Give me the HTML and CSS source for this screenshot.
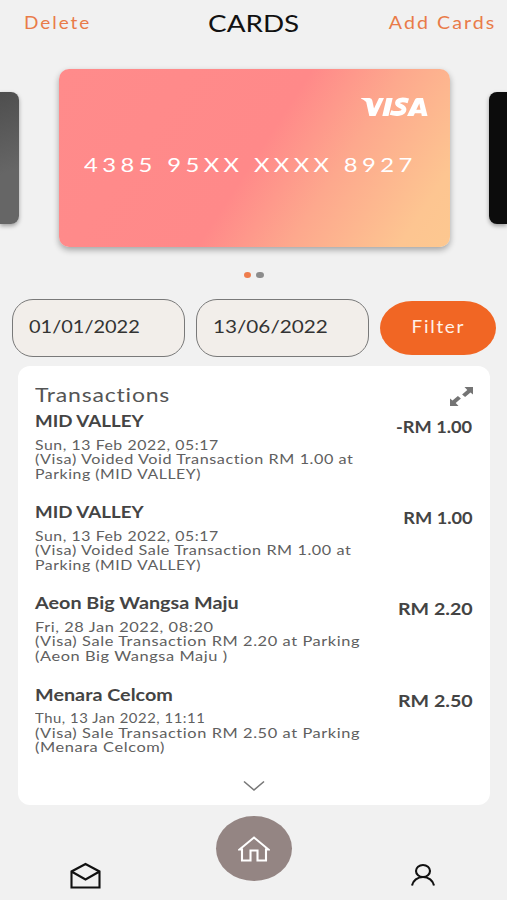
FILE: index.html
```html
<!DOCTYPE html>
<html lang="en">
<head>
<meta charset="utf-8">
<title>Cards</title>
<link rel="stylesheet" href="styles.css">
</head>
<body>
<div class="screen">
  <header class="topbar">
    <a class="action"><span class="wide">Delete</span></a>
    <h1 class="title"><span class="wide">CARDS</span></h1>
    <a class="action action-end"><span class="wide">Add Cards</span></a>
  </header>

  <section class="carousel">
    <div class="side-card side-grey"></div>
    <div class="card">
      <svg class="visa" viewBox="0 0 68 20" role="img" aria-label="Visa">
        <path d="M1 1h8.500q2.300 0 2.800 2.500l1.700 8L19 1h5L15.500 19H9.300L6.200 5Q4 2.500 1 1.500zM26.500 1h6.200l-4.200 18h-6.200zM57 1h6L67.500 19h-5.700l-.5-2.700h-6.400L53.500 19h-6.500L55 2.500Q55.600 1 57 1zM59.300 6.500l-3 6.200h4.200z"/>
        <path class="visa-s" d="M48.300 3.900C43.500 2.400 38.100 2.500 37.500 5.700c-.4 3.500 7 3.300 6.500 7.100-.5 4-8.300 4.500-13.500 2.700"/>
      </svg>
      <p class="number"><span class="wide">4385 95XX XXXX 8927</span></p>
    </div>
    <div class="side-card side-black"></div>
  </section>

  <div class="dots"><i class="dot dot-on"></i><i class="dot"></i></div>

  <section class="filters">
    <div class="date date-from"><span class="wide">01/01/2022</span></div>
    <div class="date"><span class="wide">13/06/2022</span></div>
    <button class="filter"><span class="wide">Filter</span></button>
  </section>

  <main class="panel">
    <div class="panel-head">
      <h2 class="heading"><span class="wide">Transactions</span></h2>
      <svg class="expand" viewBox="0 0 24 20">
        <path d="M15.500 0H24v7.500l-2.500-2-5.400 4.500-3-2.600 5.200-4.500zM9.500 19H1v-7.500l2.500 2 5.400-4.500 3 2.600-5.200 4.500z"/>
      </svg>
    </div>
    <ul class="list">
      <li class="row">
        <div><h3 class="name upper"><span class="wide">MID VALLEY</span></h3>
          <div class="detail"><p class="wide short">Sun, 13 Feb 2022, 05:17</p><p class="wide">(Visa) Voided Void Transaction RM 1.00 at</p><p class="wide short">Parking (MID VALLEY)</p></div></div>
        <div class="amount narrow"><span class="wide">-RM 1.00</span></div>
      </li>
      <li class="row">
        <div><h3 class="name upper"><span class="wide">MID VALLEY</span></h3>
          <div class="detail"><p class="wide short">Sun, 13 Feb 2022, 05:17</p><p class="wide">(Visa) Voided Sale Transaction RM 1.00 at</p><p class="wide short">Parking (MID VALLEY)</p></div></div>
        <div class="amount narrow"><span class="wide">RM 1.00</span></div>
      </li>
      <li class="row">
        <div><h3 class="name"><span class="wide">Aeon Big Wangsa Maju</span></h3>
          <div class="detail"><p class="wide loose">Fri, 28 Jan 2022, 08:20</p><p class="wide loose">(Visa) Sale Transaction RM 2.20 at Parking</p><p class="wide loose">(Aeon Big Wangsa Maju )</p></div></div>
        <div class="amount"><span class="wide">RM 2.20</span></div>
      </li>
      <li class="row">
        <div><h3 class="name"><span class="wide">Menara Celcom</span></h3>
          <div class="detail"><p class="wide tight">Thu, 13 Jan 2022, 11:11</p><p class="wide loose">(Visa) Sale Transaction RM 2.50 at Parking</p><p class="wide loose">(Menara Celcom)</p></div></div>
        <div class="amount"><span class="wide">RM 2.50</span></div>
      </li>
    </ul>
    <svg class="chevron" viewBox="0 0 22 12"><path d="M1 1.500l10 8.500 10-8.500"/></svg>
  </main>

  <nav class="tabs">
    <svg class="icon mail" viewBox="0 0 32 28"><path d="M2.500 9.500V25.500H30.500V9.500L16.500 2zM2.500 9.500l14 8 14-8"/></svg>
    <div class="home">
      <svg class="icon house" viewBox="0 0 32 28"><path d="M1.500 14.500L16 2.500 30.500 14.500H28V25.500H19.500V15.500H12.500V25.500H4V14.500z"/></svg>
    </div>
    <svg class="icon user" viewBox="0 0 26 24"><ellipse cx="13" cy="8" rx="7" ry="6"/><path d="M2 22.500C3 17.500 7.500 14 13 14s10 3.500 11 8.500"/></svg>
  </nav>
</div>
</body>
</html>
```

FILE: styles.css
```css
* { box-sizing: border-box; margin: 0; padding: 0; }
body { background: #f1f1f1; font-family: Lato, "Liberation Sans", sans-serif; color: #444; }
.screen { width: 507px; height: 900px; display: flex; flex-direction: column; overflow: hidden; }
.wide { display: inline-block; white-space: nowrap; transform: scaleX(1.15); transform-origin: left center; }

.topbar { height: 46px; padding: 0 12px; display: grid; grid-template-columns: minmax(0, 1fr) auto minmax(0, 1fr); align-items: center; }
.action { padding-left: 12px; color: #e97b48; font-size: 16.500px; letter-spacing: 1.700px; }
.action-end { padding: 0; text-align: right; }
.action-end .wide { transform: scaleX(1.19); transform-origin: right center; margin-right: -1px; }
.title { color: #111; font-size: 23px; font-weight: 400; }
.title .wide { transform: scaleX(1.21); transform-origin: center; }

.carousel { height: 178px; margin-top: 23px; display: flex; justify-content: space-between; align-items: center; }
.side-card { width: 19px; height: 132px; box-shadow: 0 2px 4px rgba(0, 0, 0, .35); }
.side-grey { border-radius: 0 8px 8px 0; background: linear-gradient(160deg, #4e4e4e, #666 60%); }
.side-black { width: 18px; border-radius: 8px 0 0 8px; background: #0c0c0c; }
.card { width: 391px; height: 178px; padding: 28px 22px 0 25px; border-radius: 10px; background: linear-gradient(123deg, #ff8b8b 0%, #ff8989 50%, #fda88d 68%, #fdc591 90%, #fdc890 100%); box-shadow: 0 3px 6px rgba(0, 0, 0, .32); }
.visa { display: block; width: 68px; height: 20px; margin-left: auto; fill: #fff; fill-rule: evenodd; }
.visa-s { fill: none; stroke: #fff; stroke-width: 4.800; }
.number { margin-top: 34px; color: #fff; font-size: 20px; line-height: 26px; letter-spacing: 3.700px; }
.number .wide { transform: scaleX(1.19); }

.dots { height: 8px; margin-top: 24px; display: flex; justify-content: center; align-items: center; gap: 5px; }
.dot { width: 7.500px; height: 6.500px; border-radius: 50%; background: #8c8c8c; }
.dot-on { background: #ee7c4c; }

.filters { height: 58px; margin: 20px 11px 0 12px; display: grid; grid-template-columns: 173px 173px 116px; gap: 11px; align-items: center; }
.date { height: 58px; padding: 0 16px 4px; display: flex; align-items: center; border: 1.500px solid #797979; border-radius: 21px; background: #f2eeea; color: #333; font-size: 18px; }
.date-from .wide { transform: scaleX(1.11); }
.filter { height: 54px; padding-bottom: 2px; border: 0; border-radius: 32px / 27px; background: #f16624; color: #fff1e8; font: 16.500px Lato, sans-serif; letter-spacing: 1.500px; }
.filter .wide { transform-origin: center; }

.panel { height: 439px; margin: 9px 17px 0 18px; padding: 17px 17px 0; border-radius: 12px; background: #fff; display: flex; flex-direction: column; }
.panel-head { height: 25px; display: flex; justify-content: space-between; align-items: flex-start; }
.heading { font-size: 20px; line-height: 22px; font-weight: 400; letter-spacing: .7px; color: #555; }
.expand { width: 24px; height: 20px; margin-top: 4px; fill: #747474; }
.list { list-style: none; }
.row { height: 91.200px; display: flex; justify-content: space-between; }
.name { height: 29.500px; font-size: 17.500px; line-height: 26px; font-weight: 700; }
.name .wide { transform: scaleX(1.13); }
.upper .wide { transform: scaleX(1.07); }
.detail { display: flex; flex-direction: column; align-items: flex-start; font-size: 14px; line-height: 14.500px; letter-spacing: .5px; color: #606060; }
.detail .wide { transform: scaleX(1.155); }
.detail .short { transform: scaleX(1.13); }
.detail .loose { transform: scaleX(1.17); }
.detail .tight { transform: scaleX(1.06); }
.amount { padding: 6px .5px 0 0; font-size: 17.500px; line-height: 26px; font-weight: 700; }
.amount .wide { transform: scaleX(1.12); transform-origin: right center; }
.narrow .wide { transform: scaleX(1.04); }
.chevron { width: 22px; height: 12px; margin: 7px auto 0; flex: none; fill: none; stroke: #777; stroke-width: 1.600; }

.tabs { height: 95px; padding: 11px 71px 0 69px; display: flex; justify-content: space-between; align-items: flex-start; }
.icon { fill: none; stroke: #111; stroke-width: 2.100; }
.mail { width: 32px; height: 28px; margin-top: 46px; }
.home { width: 76px; height: 65px; margin-right: 4px; border-radius: 50%; background: #948583; display: flex; justify-content: center; align-items: center; }
.house { width: 32px; height: 28px; stroke: #fff; }
.user { width: 26px; height: 24px; margin-top: 47px; }
```
